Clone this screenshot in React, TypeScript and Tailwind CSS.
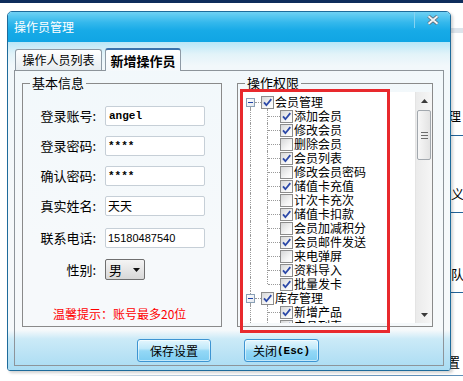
import React from "react";

const memberItems: [string, boolean][] = [
  ["添加会员", true],
  ["修改会员", true],
  ["删除会员", false],
  ["会员列表", true],
  ["修改会员密码", false],
  ["储值卡充值", true],
  ["计次卡充次", false],
  ["储值卡扣款", true],
  ["会员加减积分", false],
  ["会员邮件发送", true],
  ["来电弹屏", false],
  ["资料导入", true],
  ["批量发卡", true],
];

const stockItems: [string, boolean][] = [
  ["新增产品", true],
  ["产品列表", true],
  ["修改产品", true],
];

const Check = ({ on }: { on: boolean }) => (
  <span className="flex h-[13px] w-[13px] shrink-0 items-center justify-center border border-[#8c8c8c] bg-[linear-gradient(135deg,#d6d7d8,#f6f6f6_65%,#ffffff)]">
    {on && (
      <svg width="11" height="11" viewBox="0 0 11 11">
        <path d="M2 5.4 4.4 8.2 9.3 2.1" fill="none" stroke="#2c49a8" strokeWidth="1.8" />
      </svg>
    )}
  </span>
);

const RootRow = ({ name, on, first }: { name: string; on: boolean; first?: boolean }) => (
  <div className="flex h-[14px] items-center">
    <div className="ml-[5px] flex h-full w-[9px] flex-col items-center">
      <span
        className={`flex-1 border-l border-dotted ${first ? "border-transparent" : "border-[#9a9a9a]"}`}
      />
      <span className="flex h-[9px] w-[9px] items-center justify-center border border-[#8aa0b6] bg-[linear-gradient(135deg,#ffffff,#e4e8ee)]">
        <span className="h-px w-[5px] bg-[#1f44a8]" />
      </span>
      <span className="flex-1 border-l border-dotted border-[#9a9a9a]" />
    </div>
    <span className="w-[6px] border-t border-dotted border-[#9a9a9a]" />
    <Check on={on} />
    <span className="ml-[1px] whitespace-nowrap text-[12px] leading-[14px]">{name}</span>
  </div>
);

const ChildRow = ({ name, on, last }: { name: string; on: boolean; last?: boolean }) => (
  <div className="flex h-[14px] items-center">
    <span className="ml-[9px] h-full border-l border-dotted border-[#9a9a9a]" />
    <span
      className={`ml-[16px] border-l border-dotted border-[#9a9a9a] ${last ? "h-[7px] self-start" : "h-full"}`}
    />
    <span className="w-[12px] border-t border-dotted border-[#9a9a9a]" />
    <Check on={on} />
    <span className="ml-[1px] whitespace-nowrap text-[12px] leading-[14px]">{name}</span>
  </div>
);

const Field = ({ children }: { children: React.ReactNode }) => (
  <div className="ml-[9px] flex h-[20px] w-[100px] items-center rounded-[2px] border border-[#c6cfd7] bg-white pl-[2px]">
    {children}
  </div>
);

const Label = ({ text }: { text: string }) => (
  <span className="w-[73px] text-right text-[13px] leading-[20px]">{text}</span>
);

const BlueButton = ({ children, width }: { children: React.ReactNode; width: string }) => (
  <button
    className={`${width} flex h-[23px] items-center justify-center rounded-[3px] border border-[#3d94d2] bg-[linear-gradient(to_bottom,#e4f6fd_0%,#c0e9fa_40%,#94d8f6_52%,#7dcdf2_100%)] text-[12px] leading-[14px] text-black shadow-[inset_0_0_0_1px_rgba(255,255,255,0.55)]`}
  >
    {children}
  </button>
);

export default function App() {
  return (
    <div className="relative h-[381px] w-[463px] overflow-hidden bg-white font-['Noto_Sans_CJK_SC','Noto_Sans_CJK_JP',sans-serif] text-black">
      {/* page behind the dialog */}
      <div className="h-[3px] bg-[#0e2d5c]" />
      <div className="ml-[440px] mt-[25px] h-[5px] bg-[#dde4eb]" />
      <div className="ml-[451px] text-[13px] leading-[16px]">
        <div className="-ml-[3px] h-[102px] pt-[75px]">理</div>
        <div className="h-px bg-[#24649a]" />
        <div className="h-[76px] pt-[50px]">义</div>
        <div className="h-px bg-[#24649a]" />
        <div className="h-[79px] pt-[53px]">队</div>
        <div className="h-px bg-[#24649a]" />
        <div className="-ml-[4px] h-[82px] pt-[61px]">置</div>
      </div>
      <div className="h-px bg-[linear-gradient(to_right,#ffffff_10%,#c3d3e0_30%,#5f8fb8_90%)]" />

      {/* dialog */}
      <div className="absolute left-[7px] top-[11px] z-10 flex h-[360px] w-[444px] flex-col overflow-hidden rounded-t-[5px] rounded-b-[3px] border border-[#1e6b9b] shadow-[2px_2px_3px_rgba(0,0,0,0.18)]">
        <div className="flex h-[30px] shrink-0 justify-between bg-[linear-gradient(to_bottom,#6fd1f4,#34b8ec_35%,#17aae7_62%,#10a5e4)]">
          <span className="pl-[6px] text-[12px] leading-[30px] text-white">操作员管理</span>
          <div className="flex h-[16px] w-[36px] items-center justify-center border-l border-[#86d3f1]">
            <svg width="12" height="10" viewBox="0 0 12 10">
              <path d="M1.5 1.2 10.5 8.8M10.5 1.2 1.5 8.8" stroke="#5d6d7b" strokeWidth="3.6" />
              <path d="M1.5 1.2 10.5 8.8M10.5 1.2 1.5 8.8" stroke="#f1f4f6" strokeWidth="1.9" />
            </svg>
          </div>
        </div>

        <div className="flex-1 bg-[linear-gradient(to_bottom,#b8e6f7_0px,#e2f3f9_12px,#f2f8fb_24px,#f6f9fb_200px,#f6f9fb_288px,#cbeaf7_297px,#aadcf3_327px)] pl-[6px] pt-[6px]">
          {/* tabs */}
          <div className="flex h-[22px] items-end">
            <div className="ml-[1px] flex h-[21px] w-[87px] items-center justify-center rounded-t-[3px] border border-b-0 border-[#8e9aa5] bg-[linear-gradient(to_bottom,#ffffff,#e6ecf0)] text-[12px] leading-[14px]">
              操作人员列表
            </div>
            <div className="relative z-10 -mb-px ml-[3px] flex h-[23px] w-[76px] items-center justify-center rounded-t-[3px] border-x border-t-2 border-x-[#8e9aa5] border-t-[#3b72ad] bg-[linear-gradient(to_bottom,#ffffff,#f4f8fb)] text-[13px] font-bold leading-[14px]">
              新增操作员
            </div>
          </div>

          {/* tab pane */}
          <div className="flex h-[296px] w-[430px] flex-col border border-[#8d949a]">
            <div className="mt-[5px] flex h-[251px]">
              <fieldset className="ml-[7px] h-[251px] w-[200px] border border-[#8a8a8a]">
                <legend className="ml-[7px] px-[2px] text-[13px] leading-[14px]">基本信息</legend>
                <div className="mt-[16px] flex h-[20px] items-center">
                  <Label text="登录账号:" />
                  <Field>
                    <span className="pl-[1px] font-['Liberation_Mono',monospace] text-[11px] font-bold leading-[14px]">angel</span>
                  </Field>
                </div>
                <div className="mt-[10px] flex h-[20px] items-center">
                  <Label text="登录密码:" />
                  <Field>
                    <span className="font-['Liberation_Mono',monospace] text-[11px] font-bold leading-[14px]">****</span>
                  </Field>
                </div>
                <div className="mt-[10px] flex h-[20px] items-center">
                  <Label text="确认密码:" />
                  <Field>
                    <span className="font-['Liberation_Mono',monospace] text-[11px] font-bold leading-[14px]">****</span>
                  </Field>
                </div>
                <div className="mt-[10px] flex h-[20px] items-center">
                  <Label text="真实姓名:" />
                  <Field>
                    <span className="text-[12px] leading-[14px]">天天</span>
                  </Field>
                </div>
                <div className="mt-[12px] flex h-[20px] items-center">
                  <Label text="联系电话:" />
                  <Field>
                    <span className="font-['Liberation_Sans',sans-serif] text-[11px] leading-[14px]">15180487540</span>
                  </Field>
                </div>
                <div className="mt-[11px] flex h-[21px] items-center">
                  <Label text="性别:" />
                  <div className="ml-[9px] flex h-[21px] w-[40px] items-center justify-between rounded-[2px] border border-[#6f6f6f] bg-[linear-gradient(to_bottom,#f4f4f4,#e6e6e6_50%,#d8d8d8)] pl-[3px] pr-[4px]">
                    <span className="text-[13px] leading-[14px]">男</span>
                    <svg width="7" height="4" viewBox="0 0 7 4">
                      <path d="M0 0h7L3.5 4Z" fill="#111" />
                    </svg>
                  </div>
                </div>
                <div className="mt-[26px] pl-[30px] text-[12px] leading-[16px] text-[#ff0000]">温馨提示：账号最多20位</div>
              </fieldset>

              <fieldset className="ml-[15px] h-[251px] w-[196px] border border-[#8a8a8a]">
                <legend className="ml-[7px] px-[2px] text-[13px] leading-[14px]">操作权限</legend>
                <div className="relative ml-[3px] mt-[2px] flex h-[231px] w-[191px] bg-white">
                  <div className="h-full flex-1 overflow-hidden pt-[3px]">
                    <RootRow name="会员管理" on first />
                    {memberItems.map(([name, on], i) => (
                      <ChildRow key={name} name={name} on={on} last={i === memberItems.length - 1} />
                    ))}
                    <RootRow name="库存管理" on />
                    {stockItems.map(([name, on]) => (
                      <ChildRow key={name} name={name} on={on} />
                    ))}
                  </div>
                  <div className="flex w-[17px] flex-col border-l border-[#e4e4e4] bg-[linear-gradient(to_right,#ebebeb,#f6f6f6)]">
                    <div className="flex h-[17px] items-center justify-center">
                      <svg width="7" height="4" viewBox="0 0 7 4">
                        <path d="M0 4 3.5 0 7 4Z" fill="#3a3a3a" />
                      </svg>
                    </div>
                    <div className="mx-[1px] mt-[1px] flex h-[50px] flex-col items-center justify-center gap-[2px] rounded-[2px] border border-[#a2a8ae] bg-[linear-gradient(to_right,#f7f7f7,#e3e3e3)]">
                      <span className="h-px w-[7px] bg-[#6c6c6c]" />
                      <span className="h-px w-[7px] bg-[#6c6c6c]" />
                      <span className="h-px w-[7px] bg-[#6c6c6c]" />
                    </div>
                    <div className="flex-1" />
                    <div className="flex h-[17px] items-center justify-center">
                      <svg width="7" height="4" viewBox="0 0 7 4">
                        <path d="M0 0h7L3.5 4Z" fill="#3a3a3a" />
                      </svg>
                    </div>
                  </div>
                  {/* red highlight drawn over the list */}
                  <div className="pointer-events-none absolute -left-px -top-[3px] z-20 h-[244px] w-[150px] border-[3px] border-[#e8292d]" />
                </div>
              </fieldset>
            </div>

            <div className="mt-[12px] flex">
              <div className="ml-[122px]">
                <BlueButton width="w-[74px]">保存设置</BlueButton>
              </div>
              <div className="ml-[33px]">
                <BlueButton width="w-[75px]">
                  关闭<span className="font-['Liberation_Mono',monospace] text-[11px] font-bold">(Esc)</span>
                </BlueButton>
              </div>
            </div>
          </div>
        </div>
      </div>
    </div>
  );
}
